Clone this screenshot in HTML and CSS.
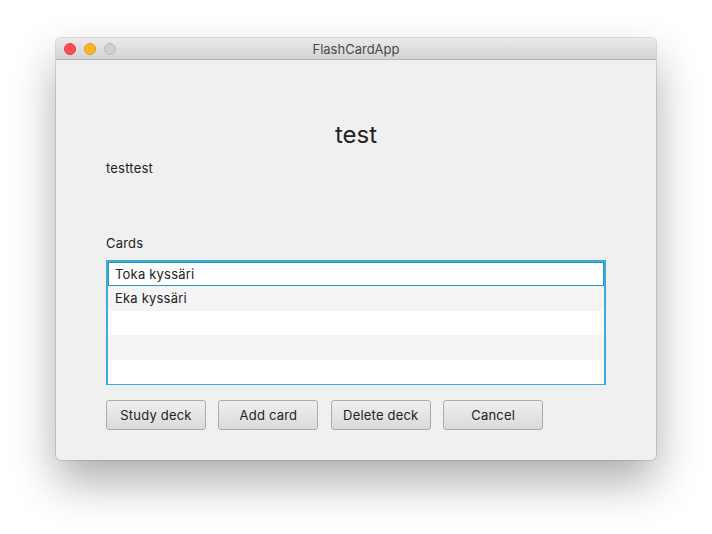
FILE: index.html
```html
<!DOCTYPE html>
<html>
<head>
<meta charset="utf-8">
<link rel="stylesheet" href="styles.css">
</head>
<body>
<div class="window">
  <div class="titlebar">
    <div class="lights">
      <span class="light red"></span>
      <span class="light yellow"></span>
      <span class="light gray"></span>
    </div>
    <div class="title">FlashCardApp</div>
  </div>
  <div class="content">
    <div class="deck-title">test</div>
    <div class="desc">testtest</div>
    <div class="label">Cards</div>
    <div class="list">
      <div class="row selected">Toka kyssäri</div>
      <div class="row alt">Eka kyssäri</div>
      <div class="row"></div>
      <div class="row alt"></div>
      <div class="row"></div>
    </div>
    <div class="buttons">
      <button class="btn">Study deck</button>
      <button class="btn">Add card</button>
      <button class="btn">Delete deck</button>
      <button class="btn">Cancel</button>
    </div>
  </div>
</div>
</body>
</html>
```
FILE: styles.css
```css
html, body {
  margin: 0;
  padding: 0;
  background: #ffffff;
  font-family: Inter, "Liberation Sans", Arial, sans-serif;
}
body {
  padding-top: 38px;
  padding-left: 56px;
  height: 534px;
  box-sizing: border-box;
  overflow: hidden;
}
.window {
  width: 600px;
  height: 422px;
  border-radius: 5px;
  background: #f0f0f0;
  box-shadow: 0 22px 45px rgba(0, 0, 0, 0.32), 0 0 0 1px rgba(0, 0, 0, 0.12);
  overflow: hidden;
  display: flex;
  flex-direction: column;
}
.titlebar {
  height: 22px;
  box-sizing: border-box;
  background: linear-gradient(#ebe9eb, #d5d4d5);
  border-bottom: 1px solid #b3b3b3;
  position: relative;
  display: flex;
  align-items: center;
  justify-content: center;
}
.lights {
  position: absolute;
  left: 8px;
  top: 5px;
  display: flex;
  gap: 8px;
}
.light {
  width: 12px;
  height: 12px;
  border-radius: 50%;
  box-sizing: border-box;
}
.red { background: #fc4e4f; border: 1px solid #df3d3e; }
.yellow { background: #fdb42b; border: 1px solid #dd9b20; }
.gray { background: #cfcfcf; border: 1px solid #b9b9b9; }
.title {
  font-size: 13px;
  color: #4a4a4a;
}
.content {
  padding: 60px 50px 0 50px;
  display: flex;
  flex-direction: column;
}
.deck-title {
  font-size: 24px;
  line-height: 30px;
  text-align: center;
  color: #222;
}
.desc {
  margin-top: 10px;
  font-size: 13px;
  line-height: 16px;
  color: #222;
  letter-spacing: 0.2px;
}
.label {
  margin-top: 59px;
  font-size: 13px;
  line-height: 16px;
  color: #222;
  letter-spacing: 0.2px;
}
.list {
  margin-top: 9px;
  width: 500px;
  height: 125px;
  box-sizing: border-box;
  border: 2px solid #3fa9dc;
  box-shadow: inset 0 0 0 1px #c4e3f2;
  background: #fff;
  padding: 0;
  display: flex;
  flex-direction: column;
}
.row {
  height: 24.4px;
  flex: none;
  box-sizing: border-box;
  padding-left: 7px;
  font-size: 13px;
  line-height: 24px;
  color: #222;
  background: #fff;
  letter-spacing: 0.2px;
}
.row.alt {
  background: #f4f4f4;
}
.row.selected {
  border: 1px solid #2a93b8;
  padding-left: 6px;
  line-height: 22px;
}
.buttons {
  margin-top: 15px;
  display: flex;
  gap: 12.4px;
}
.btn {
  width: 100px;
  height: 30px;
  box-sizing: border-box;
  border: 1px solid #ababab;
  border-radius: 3px;
  background: linear-gradient(#efefef, #dadada);
  font-family: Inter, "Liberation Sans", Arial, sans-serif;
  font-size: 13px;
  color: #222;
  padding: 0;
  letter-spacing: 0.2px;
}
```
